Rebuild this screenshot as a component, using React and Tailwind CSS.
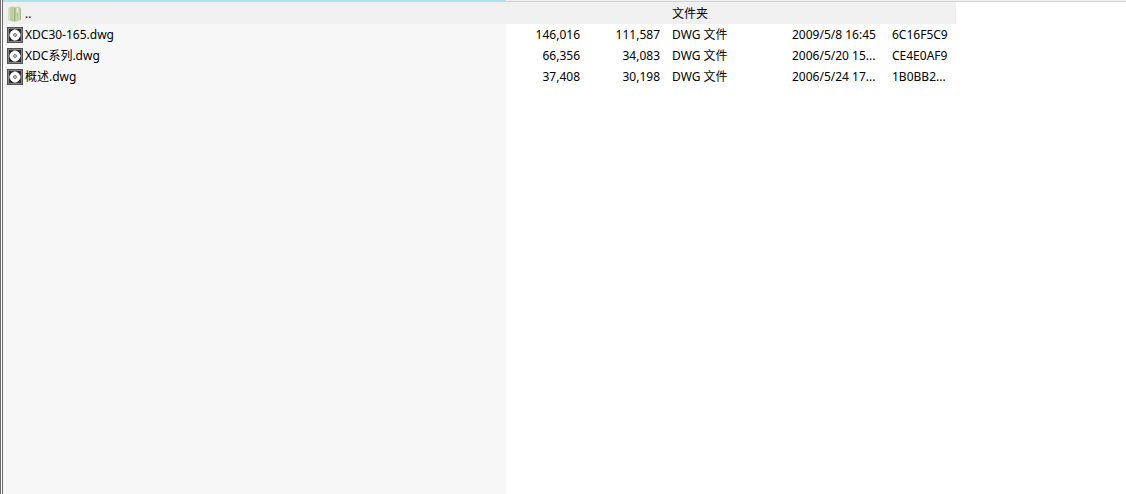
import React from "react";

const files = [
  { name: "XDC30-165.dwg", size: "146,016", packed: "111,587", type: "DWG 文件", modified: "2009/5/8 16:45", crc: "6C16F5C9" },
  { name: "XDC系列.dwg", size: "66,356", packed: "34,083", type: "DWG 文件", modified: "2006/5/20 15...", crc: "CE4E0AF9" },
  { name: "概述.dwg", size: "37,408", packed: "30,198", type: "DWG 文件", modified: "2006/5/24 17...", crc: "1B0BB2..." },
];

function FolderIcon() {
  return (
    <svg viewBox="0 0 16 16" className="size-4 shrink-0" aria-hidden="true">
      <path d="M1 2.2 6 .6 7.5 1.4 11.6.6 14 2.4V13.8L8.5 15.6 6.5 15.4 1 14z" fill="#b9c79b" />
      <path d="M1 2.2 3.4 1.5V14.5L1 14z" fill="#d6dfc2" />
      <path d="M3.4 1.5 6 .6 7.2 1.4V15.4L3.4 14.5z" fill="#bfcca4" />
      <path d="M8.6 2.8 14 2.2V13.8L8.6 15.6z" fill="#c6d2ad" />
      <path d="M7.8 1.8V15.2" stroke="#93a578" strokeWidth=".8" />
      <path d="M9.6 1.4H11.2V7L10.4 6.3 9.6 7z" fill="#e8eedd" />
      <path d="M13.5 3V13.6" stroke="#a3b388" strokeWidth=".7" />
    </svg>
  );
}

function DrawingIcon() {
  return (
    <svg viewBox="0 0 16 16" className="size-4 shrink-0" aria-hidden="true">
      <rect width="16" height="16" fill="#505050" />
      <rect x="1" y="1" width="14" height="14" fill="#858585" />
      <path d="M2 2H7L2 7zM14 2V7L9 2zM2 14V9L7 14zM14 14H9L14 9z" fill="#2e2e2e" />
      <circle cx="8" cy="8" r="5.2" fill="#fff" />
      <circle cx="8" cy="8" r="1.5" fill="#ccc" stroke="#777" strokeWidth="1" />
    </svg>
  );
}

export default function App() {
  return (
    <div className="flex min-h-screen bg-white font-['Noto_Sans','Noto_Sans_CJK_SC',sans-serif] text-xs text-black">
      <div className="w-[3px] shrink-0 border-x border-[#6f6a6c] bg-white" />
      <main className="min-w-0 flex-1 bg-[linear-gradient(to_right,#f7f7f7_503px,#ffffff_503px)]">
        <div className="flex h-0.5 items-stretch">
          <div className="w-[503px] border-t border-[#a9e4ef] bg-[#a9e4ef]" />
          <div className="flex-1 border-t border-[#f0f0f0] bg-[#d3d3d3]" />
        </div>
        <table className="w-[953px] table-fixed border-collapse">
          <colgroup>
            <col className="w-[503px]" />
            <col className="w-20" />
            <col className="w-20" />
            <col className="w-[120px]" />
            <col className="w-[100px]" />
            <col />
          </colgroup>
          <tbody>
            <tr className="h-[22px] bg-[#f0f0f0]">
              <td className="p-0 pt-px pl-1">
                <span className="flex items-center gap-0.5"><FolderIcon />..</span>
              </td>
              <td /><td />
              <td className="p-0 pt-px pl-1.5">文件夹</td>
              <td /><td />
            </tr>
            {files.map((f) => (
              <tr key={f.name} className="h-[21px] whitespace-nowrap">
                <td className="p-0 pl-1">
                  <span className="flex items-center gap-0.5"><DrawingIcon />{f.name}</span>
                </td>
                <td className="p-0 pr-1.5 text-right">{f.size}</td>
                <td className="p-0 pr-1.5 text-right">{f.packed}</td>
                <td className="p-0 pl-1.5">{f.type}</td>
                <td className="p-0 pl-1.5">{f.modified}</td>
                <td className="p-0 pl-1.5">{f.crc}</td>
              </tr>
            ))}
          </tbody>
        </table>
      </main>
    </div>
  );
}
